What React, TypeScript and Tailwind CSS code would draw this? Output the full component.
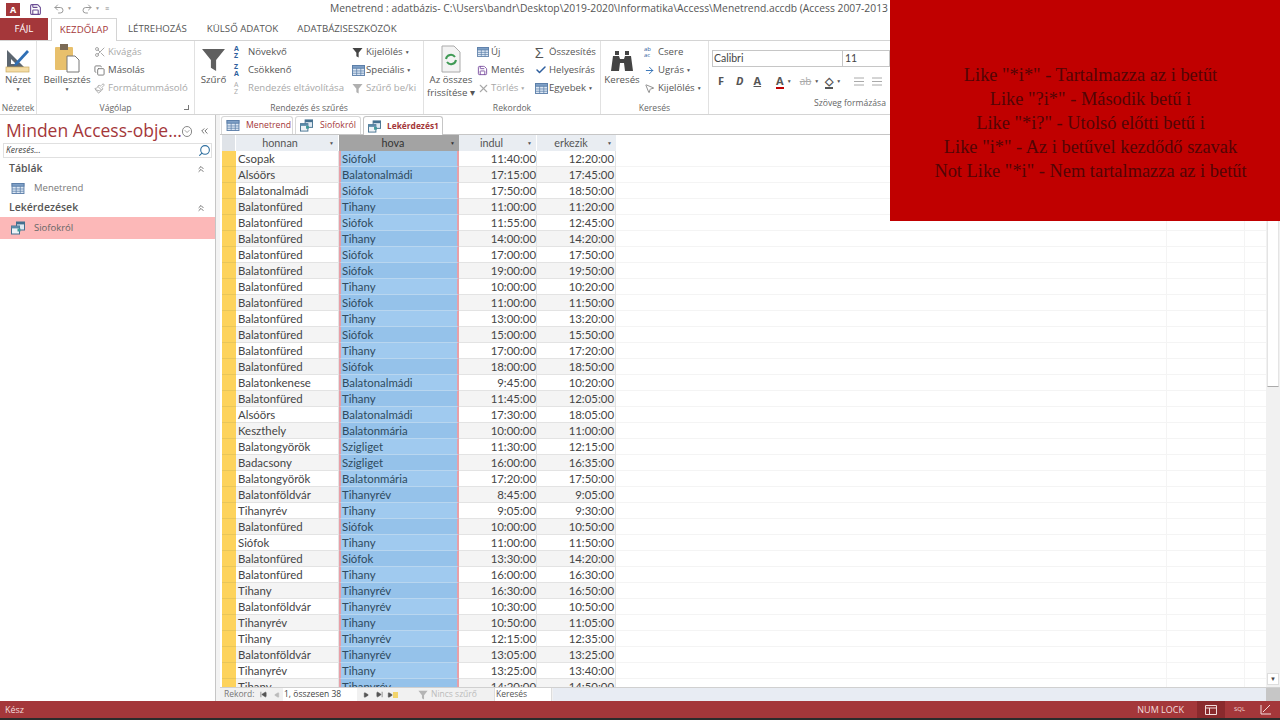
import { ChevronsUp, ChevronsLeft, Search, Scissors, Copy, Paintbrush, ChevronDown, Undo2, Redo2, Save, X, Check, ArrowRight, MousePointer2, SkipBack, SkipForward, Play } from 'lucide-react';
import type { ReactNode } from 'react';

const rows: [string, string, string, string][] = [
  ['Csopak', 'Siófok', '11:40:00', '12:20:00'],
  ['Alsóörs', 'Balatonalmádi', '17:15:00', '17:45:00'],
  ['Balatonalmádi', 'Siófok', '17:50:00', '18:50:00'],
  ['Balatonfüred', 'Tihany', '11:00:00', '11:20:00'],
  ['Balatonfüred', 'Siófok', '11:55:00', '12:45:00'],
  ['Balatonfüred', 'Tihany', '14:00:00', '14:20:00'],
  ['Balatonfüred', 'Siófok', '17:00:00', '17:50:00'],
  ['Balatonfüred', 'Siófok', '19:00:00', '19:50:00'],
  ['Balatonfüred', 'Tihany', '10:00:00', '10:20:00'],
  ['Balatonfüred', 'Siófok', '11:00:00', '11:50:00'],
  ['Balatonfüred', 'Tihany', '13:00:00', '13:20:00'],
  ['Balatonfüred', 'Siófok', '15:00:00', '15:50:00'],
  ['Balatonfüred', 'Tihany', '17:00:00', '17:20:00'],
  ['Balatonfüred', 'Siófok', '18:00:00', '18:50:00'],
  ['Balatonkenese', 'Balatonalmádi', '9:45:00', '10:20:00'],
  ['Balatonfüred', 'Tihany', '11:45:00', '12:05:00'],
  ['Alsóörs', 'Balatonalmádi', '17:30:00', '18:05:00'],
  ['Keszthely', 'Balatonmária', '10:00:00', '11:00:00'],
  ['Balatongyörök', 'Szigliget', '11:30:00', '12:15:00'],
  ['Badacsony', 'Szigliget', '16:00:00', '16:35:00'],
  ['Balatongyörök', 'Balatonmária', '17:20:00', '17:50:00'],
  ['Balatonföldvár', 'Tihanyrév', '8:45:00', '9:05:00'],
  ['Tihanyrév', 'Tihany', '9:05:00', '9:30:00'],
  ['Balatonfüred', 'Siófok', '10:00:00', '10:50:00'],
  ['Siófok', 'Tihany', '11:00:00', '11:50:00'],
  ['Balatonfüred', 'Siófok', '13:30:00', '14:20:00'],
  ['Balatonfüred', 'Tihany', '16:00:00', '16:30:00'],
  ['Tihany', 'Tihanyrév', '16:30:00', '16:50:00'],
  ['Balatonföldvár', 'Tihanyrév', '10:30:00', '10:50:00'],
  ['Tihanyrév', 'Tihany', '10:50:00', '11:05:00'],
  ['Tihany', 'Tihanyrév', '12:15:00', '12:35:00'],
  ['Balatonföldvár', 'Tihanyrév', '13:05:00', '13:25:00'],
  ['Tihanyrév', 'Tihany', '13:25:00', '13:40:00'],
  ['Tihany', 'Tihanyrév', '14:20:00', '14:50:00'],
];

const notes = [
  'Like "*i*" - Tartalmazza az i betűt',
  'Like "?i*" - Második betű i',
  'Like "*i?" - Utolsó előtti betű i',
  'Like "i*" - Az i betűvel kezdődő szavak',
  'Not Like "*i" - Nem tartalmazza az i betűt',
];

const TableIcon = ({ className = '' }: { className?: string }) => (
  <svg viewBox="0 0 14 12" className={className}>
    <rect x="0.5" y="0.5" width="13" height="11" fill="#dbe6f3" stroke="#5b7ea8" />
    <rect x="0.5" y="0.5" width="13" height="3" fill="#7fa0c6" stroke="#5b7ea8" />
    <path d="M5 3.5v8M9.5 3.5v8M0.5 6.5h13M0.5 9h13" stroke="#5b7ea8" strokeWidth="0.8" />
  </svg>
);

const QueryIcon = ({ className = '' }: { className?: string }) => (
  <svg viewBox="0 0 14 14" className={className}>
    <rect x="5.5" y="1" width="8" height="8" fill="#dfe9f2" stroke="#44708f" />
    <rect x="5.5" y="1" width="8" height="2.4" fill="#44708f" />
    <rect x="0.5" y="5" width="8" height="8" fill="#eef3f7" stroke="#44708f" />
    <rect x="0.5" y="5" width="8" height="2.4" fill="#5a8aa8" />
    <rect x="6.5" y="7.5" width="3" height="3" fill="#3f9a9a" />
  </svg>
);

const Funnel = ({ color, className = '' }: { color: string; className?: string }) => (
  <svg viewBox="0 0 24 24" className={className}>
    <path d="M1 2h22L14.5 12.5V23l-5-3v-7.5z" fill={color} />
  </svg>
);

const AlignIcon = ({ className = '' }: { className?: string }) => (
  <svg viewBox="0 0 10 9" className={`h-[9px] w-[10px] ${className}`}>
    <path d="M0 1h10M0 4.5h10M0 8h10" stroke="#aaa" />
  </svg>
);

// small ribbon row: icon + label, optional dropdown caret
function Cmd({ icon, label, off, caret, className = '' }: { icon: ReactNode; label: string; off?: boolean; caret?: boolean; className?: string }) {
  return (
    <div className={`flex h-[18px] items-center gap-[2px] whitespace-nowrap text-[9.6px] ${off ? 'text-[#a8a8a8]' : 'text-[#555]'} ${className}`}>
      <span className="-mr-[2px] flex w-[14px] shrink-0 justify-start">{icon}</span>
      <span>{label}</span>
      {caret && <span className="text-[5px] leading-none">▼</span>}
    </div>
  );
}

function Group({ label, width, launcher, children }: { label: string; width: string; launcher?: boolean; children: ReactNode }) {
  return (
    <div className={`relative flex shrink-0 flex-col border-r border-[#e1e1e1] ${width}`}>
      <div className="flex h-[61px] px-[3px] pt-[2px]">{children}</div>
      <div className="text-center text-[8.6px] leading-[12px] text-[#666]">{label}</div>
      {launcher && <span className="absolute bottom-[4px] right-[5px] h-[5px] w-[5px] border-b border-r border-[#777]" />}
    </div>
  );
}

function Big({ icon, lines, caret, className = '' }: { icon: ReactNode; lines: string[]; caret?: boolean; className?: string }) {
  return (
    <div className={`flex flex-col items-center text-[9.7px] leading-[13px] text-[#555] ${className}`}>
      <div className="flex h-[30px] items-end justify-center">{icon}</div>
      {lines.map((l) => (
        <span key={l} className="whitespace-nowrap">{l}</span>
      ))}
      {caret && <span className="mt-[1px] text-[5px] leading-none">▼</span>}
    </div>
  );
}

export default function App() {
  return (
    <div className="relative flex h-[720px] w-[1280px] flex-col overflow-hidden bg-white font-['Open_Sans',sans-serif] text-[#444]">
      {/* title bar */}
      <div className="flex h-[18px] shrink-0 items-center">
        <div className="ml-[6px] flex h-[13px] w-[14px] items-center justify-center bg-[#a4373a] text-[9px] font-bold leading-none text-white">A</div>
        <Save className="ml-[9px] h-[13px] w-[13px] text-[#6a4c93]" strokeWidth={2} />
        <Undo2 className="ml-[11px] h-[12px] w-[12px] text-[#999]" />
        <span className="ml-[2px] text-[5px] text-[#999]">▼</span>
        <Redo2 className="ml-[9px] h-[12px] w-[12px] text-[#999]" />
        <span className="ml-[2px] text-[5px] text-[#999]">▼</span>
        <span className="ml-[5px] text-[7px] text-[#888]">≡</span>
        <span className="ml-[221px] whitespace-nowrap text-[10.3px] text-[#555]">
          Menetrend : adatbázis- C:\Users\bandr\Desktop\2019-2020\Informatika\Access\Menetrend.accdb (Access 2007-2013 fájlformátum) - Access
        </span>
      </div>

      {/* ribbon tabs */}
      <div className="flex h-[22px] shrink-0 items-stretch text-[9.7px] text-[#555]">
        <div className="flex w-[48px] items-center justify-center bg-[#a4373a] text-white">FÁJL</div>
        <div className="relative z-10 -mb-px ml-[3px] flex w-[66px] items-center justify-center border border-b-0 border-[#d4d4d4] bg-white text-[#a4373a]">KEZDŐLAP</div>
        <div className="ml-[11px] flex items-center">LÉTREHOZÁS</div>
        <div className="ml-[20px] flex items-center">KÜLSŐ ADATOK</div>
        <div className="ml-[19px] flex items-center">ADATBÁZISESZKÖZÖK</div>
      </div>

      {/* ribbon */}
      <div className="flex h-[75px] shrink-0 border-y border-[#d4d4d4] bg-white">
        <Group label="Nézetek" width="w-[37px]">
          <Big
            className="w-full"
            caret
            lines={['Nézet']}
            icon={
              <svg viewBox="0 0 26 26" className="h-[26px] w-[26px]">
                <path d="M2 3v17h17z M6 12v5h5z" fill="#5c6670" fillRule="evenodd" />
                <path d="M10 16L22 3l2 2L12 18l-3 1z" fill="#2f6fb5" />
                <rect x="1" y="20" width="23" height="5" fill="#f4dca4" stroke="#c9a860" strokeWidth="0.7" />
              </svg>
            }
          />
        </Group>
        <Group label="Vágólap" width="w-[158px]" launcher>
          <Big
            className="ml-[3px] w-[48px]"
            caret
            lines={['Beillesztés']}
            icon={
              <svg viewBox="0 0 26 30" className="h-[30px] w-[26px]">
                <rect x="1" y="4" width="18" height="23" rx="1" fill="#e8c06c" />
                <rect x="6" y="1" width="8" height="6" fill="#7b6a55" />
                <path d="M13 13h8l4 4v12H13z" fill="#fff" stroke="#777" />
              </svg>
            }
          />
          <div className="ml-[3px] flex flex-col">
            <Cmd off label="Kivágás" icon={<Scissors className="h-[12px] w-[12px]" />} />
            <Cmd label="Másolás" icon={<Copy className="h-[11px] w-[11px] text-[#777]" />} />
            <Cmd off label="Formátummásoló" icon={<Paintbrush className="h-[11px] w-[11px]" />} />
          </div>
        </Group>
        <Group label="Rendezés és szűrés" width="w-[229px]">
          <Big className="ml-[1px] w-[29px]" lines={['Szűrő']} icon={<Funnel color="#5f5f5f" className="h-[27px] w-[25px]" />} />
          <div className="ml-[6px] flex w-[118px] flex-col">
            <Cmd label="Növekvő" icon={<span className="text-[7px] font-bold leading-[7px] text-[#2f5f9e]">A<br />Z</span>} />
            <Cmd label="Csökkenő" icon={<span className="text-[7px] font-bold leading-[7px] text-[#2f5f9e]">Z<br />A</span>} />
            <Cmd off label="Rendezés eltávolítása" icon={<span className="text-[7px] leading-[7px] text-[#aaa]">A<br />Z</span>} />
          </div>
          <div className="flex flex-col">
            <Cmd caret label="Kijelölés" icon={<Funnel color="#444" className="h-[11px] w-[11px]" />} />
            <Cmd caret label="Speciális" icon={<TableIcon className="h-[11px] w-[13px]" />} />
            <Cmd off label="Szűrő be/ki" icon={<Funnel color="#b0b0b0" className="h-[11px] w-[11px]" />} />
          </div>
        </Group>
        <Group label="Rekordok" width="w-[177px]">
          <Big
            className="w-[48px]"
            lines={['Az összes', 'frissítése ▾']}
            icon={
              <svg viewBox="0 0 22 28" className="h-[28px] w-[22px]">
                <path d="M2 1h12l6 6v20H2z" fill="#f3f3f3" stroke="#aaa" />
                <path d="M6 14a5 5 0 0 1 9-2M16 15a5 5 0 0 1-9 2" fill="none" stroke="#3f9a55" strokeWidth="2" />
              </svg>
            }
          />
          <div className="ml-[2px] flex w-[58px] flex-col">
            <Cmd label="Új" icon={<TableIcon className="h-[10px] w-[12px]" />} />
            <Cmd label="Mentés" icon={<Save className="h-[11px] w-[11px] text-[#7b4fa0]" />} />
            <Cmd off caret label="Törlés" icon={<X className="h-[13px] w-[13px]" />} />
          </div>
          <div className="flex flex-col">
            <Cmd label="Összesítés" icon={<span className="text-[15px] leading-none">Σ</span>} />
            <Cmd label="Helyesírás" icon={<Check className="h-[12px] w-[12px] text-[#2f5f9e]" strokeWidth={3} />} />
            <Cmd caret label="Egyebek" icon={<TableIcon className="h-[11px] w-[13px]" />} />
          </div>
        </Group>
        <Group label="Keresés" width="w-[108px]">
          <Big
            className="w-[36px]"
            lines={['Keresés']}
            icon={
              <svg viewBox="0 0 24 24" className="h-[24px] w-[24px]">
                <path d="M3 7h6l1 3h4l1-3h6l2 15h-8l-1-8h-4l-1 8H1z M5 2h4v4H5z M15 2h4v4h-4z" fill="#444" />
              </svg>
            }
          />
          <div className="ml-[4px] flex flex-col">
            <Cmd label="Csere" icon={<span className="text-[6px] leading-[6px] text-[#2f5f9e]">ab<br />ac</span>} />
            <Cmd caret label="Ugrás" icon={<ArrowRight className="h-[11px] w-[11px] text-[#2f6fb5]" />} />
            <Cmd caret label="Kijelölés" icon={<MousePointer2 className="h-[11px] w-[11px] text-[#888]" />} />
          </div>
        </Group>
        <div className="flex w-[181px] shrink-0 flex-col pl-[3px] pt-[9px]">
          <div className="flex h-[17px] w-[178px] items-center border border-[#c6c6c6] text-[10.5px]">
            <span className="w-[130px] border-r border-[#c6c6c6] pl-[1px] font-['Lato',sans-serif]">Calibri</span>
            <span className="pl-[2px] font-['Lato',sans-serif]">11</span>
          </div>
          <div className="mt-[7px] flex h-[15px] items-center pl-[6px] text-[11px] font-bold text-[#555]">
            <span>F</span>
            <span className="ml-[12px] italic">D</span>
            <span className="ml-[10px] underline">A</span>
            <span className="ml-[15px] border-b-2 border-[#c00000] leading-[12px]">A</span>
            <span className="ml-[3px] text-[5px] font-normal">▼</span>
            <span className="ml-[8px] text-[10px] font-normal text-[#aaa] line-through">ab</span>
            <span className="ml-[3px] text-[5px] font-normal">▼</span>
            <span className="ml-[6px] border-b-2 border-[#555] leading-[12px]">◇</span>
            <span className="ml-[3px] text-[5px] font-normal">▼</span>
            <AlignIcon className="ml-[13px]" />
            <AlignIcon className="ml-[8px]" />
          </div>
          <div className="mt-[8px] whitespace-nowrap pl-[102px] text-[8.6px] leading-[12px] text-[#666]">Szöveg formázása</div>
        </div>
      </div>

      {/* body */}
      <div className="flex min-h-0 flex-1">
        {/* navigation pane */}
        <div className="flex w-[216px] shrink-0 flex-col border-r border-[#c6c6c6]">
          <div className="flex h-[28px] shrink-0 items-end pb-[2px] pl-[6px] pr-[5px]">
            <span className="flex-1 whitespace-nowrap text-[17.5px] leading-[22px] text-[#a4373a]">Minden Access-obje...</span>
            <ChevronDown className="mb-[4px] h-[11px] w-[11px] rounded-full border border-[#888] text-[#777]" />
            <ChevronsLeft className="mb-[4px] ml-[7px] h-[12px] w-[12px] text-[#666]" />
          </div>
          <div className="mx-[3px] flex h-[15px] shrink-0 items-center justify-between border border-[#e0e0e0] pl-[2px] text-[8.5px] italic text-[#444]">
            Keresés...
            <Search className="h-[13px] w-[13px] -scale-x-100 text-[#2f6f9f]" />
          </div>
          <div className="mt-[1px] flex h-[20px] items-center justify-between pl-[9px] pr-[9px] text-[10.5px] font-semibold text-[#555]">
            Táblák
            <ChevronsUp className="h-[10px] w-[10px]" />
          </div>
          <div className="flex h-[19px] items-center pl-[11px] text-[9.5px] text-[#777]">
            <TableIcon className="h-[11px] w-[14px]" />
            <span className="ml-[9px]">Menetrend</span>
          </div>
          <div className="flex h-[19px] items-center justify-between pl-[9px] pr-[9px] text-[10.5px] font-semibold text-[#555]">
            Lekérdezések
            <ChevronsUp className="h-[10px] w-[10px]" />
          </div>
          <div className="flex h-[22px] items-center bg-[#fcb8b8] pl-[11px] text-[9.5px] text-[#666]">
            <QueryIcon className="h-[14px] w-[14px]" />
            <span className="ml-[9px]">Siofokról</span>
          </div>
        </div>

        {/* splitter */}
        <div className="w-[4px] shrink-0 bg-[#f3f3f3]" />

        {/* document area */}
        <div className="flex min-w-0 flex-1 flex-col">
          <div className="flex h-[20px] shrink-0 items-stretch gap-[2px] border-b border-[#c6c6c6] pl-[1px] pt-[1px] text-[8.7px] text-[#a4373a]">
            <div className="flex w-[72px] items-center gap-[6px] rounded-t-[3px] border border-b-0 border-[#d8d8d8] pl-[4px]">
              <TableIcon className="h-[11px] w-[14px]" />
              Menetrend
            </div>
            <div className="flex w-[66px] items-center gap-[7px] rounded-t-[3px] border border-b-0 border-[#d8d8d8] pl-[4px]">
              <QueryIcon className="h-[13px] w-[13px]" />
              Siofokról
            </div>
            <div className="relative z-10 -mb-px flex w-[80px] items-center gap-[6px] rounded-t-[3px] border border-b-0 border-[#c6c6c6] bg-white pl-[4px] text-[8.4px] font-bold">
              <QueryIcon className="h-[13px] w-[13px]" />
              Lekérdezés1
            </div>
          </div>

          <div className="flex min-h-0 flex-1">
            <div className="relative min-w-0 flex-1 overflow-hidden font-['Lato',sans-serif] text-[11.4px] text-[#454545]">
              {/* header row */}
              <div className="flex h-[16px] items-stretch text-[10.8px] leading-[15px] text-[#555]">
                <div className="ml-[2px] w-[14px] shrink-0 border-r border-white bg-[#dfe3e8]" />
                <div className="relative w-[103px] shrink-0 border-r border-white bg-[#e9edf2] pr-[14px] text-center">
                  honnan
                  <span className="absolute right-[4px] top-[1px] text-[5px]">▼</span>
                </div>
                <div className="relative w-[120px] shrink-0 bg-[#a3a3a3] pr-[12px] text-center text-[#333]">
                  hova
                  <span className="absolute right-[4px] top-[1px] text-[5px]">▼</span>
                </div>
                <div className="relative w-[78px] shrink-0 border-r border-white bg-[#e9edf2] pr-[12px] text-center">
                  indul
                  <span className="absolute right-[4px] top-[1px] text-[5px]">▼</span>
                </div>
                <div className="relative w-[79px] shrink-0 bg-[#e9edf2] pr-[11px] text-center">
                  erkezik
                  <span className="absolute right-[4px] top-[1px] text-[5px]">▼</span>
                </div>
              </div>
              {rows.map((r, i) => (
                <div key={i} className="flex h-[16px] items-stretch leading-[16px]">
                  <div className="ml-[2px] w-[14px] shrink-0 border-b border-[#e9c65a] bg-[#fdd35d]" />
                  <div className={`w-[103px] shrink-0 border-b border-r border-[#e3e3e3] pl-[2px] ${i % 2 ? 'bg-[#f4f4f4]' : 'bg-white'}`}>{r[0]}</div>
                  <div className={`w-[120px] shrink-0 border-x-2 border-b border-x-[#e8a0a8] border-b-[#b9d6ef] pl-[1px] text-[#2f4a5e] ${i % 2 ? 'bg-[#95c2ea]' : 'bg-[#a0caef]'}`}>{r[1]}</div>
                  <div className={`w-[78px] shrink-0 border-b border-r border-[#e3e3e3] text-right ${i % 2 ? 'bg-[#f4f4f4]' : 'bg-white'}`}>{r[2]}</div>
                  <div className={`w-[79px] shrink-0 border-b border-r border-[#e3e3e3] pr-[1px] text-right ${i % 2 ? 'bg-[#f4f4f4]' : 'bg-white'}`}>{r[3]}</div>
                  <div className="w-[551px] shrink-0 border-b border-r border-[#f4f4f4]" />
                  <div className="w-[78px] shrink-0 border-b border-r border-[#f4f4f4]" />
                  <div className="flex-1 border-b border-[#f4f4f4]" />
                </div>
              ))}
              {/* text cursor over the first cell */}
              <span className="absolute left-[153px] top-[16px] text-[11px] leading-[14px] text-[#444]">I</span>
            </div>
            {/* vertical scrollbar */}
            <div className="flex w-[14px] shrink-0 flex-col bg-[#f1f1f1] py-0 pl-[1px] pr-[1px]">
              <div className="h-[252px] border-x border-b border-x-[#e4e4e4] border-b-[#aaa] bg-white" />
              <div className="flex-1" />
              <div className="mb-[2px] flex h-[12px] items-center justify-center border border-[#ddd] bg-white text-[6px]">▼</div>
            </div>
          </div>

          {/* record navigator */}
          <div className="flex h-[14px] shrink-0 items-center border-t border-[#d0d0d0] bg-[#f1f1f1] pl-[4px] text-[8.5px] text-[#777]">
            <span className="w-[36px] shrink-0">Rekord:</span>
            <SkipBack className="h-[7px] w-[7px] shrink-0 fill-[#555] text-[#555]" />
            <Play className="ml-[7px] h-[6px] w-[6px] shrink-0 rotate-180 fill-[#bbb] text-[#bbb]" />
            <span className="ml-[3px] w-[74px] shrink-0 bg-white pl-[1px] text-[#444]">1, összesen 38</span>
            <Play className="ml-[6px] h-[6px] w-[6px] shrink-0 fill-[#555] text-[#555]" />
            <SkipForward className="ml-[7px] h-[7px] w-[7px] shrink-0 fill-[#555] text-[#555]" />
            <Play className="ml-[4px] h-[6px] w-[6px] shrink-0 fill-[#555] text-[#555]" />
            <span className="h-[6px] w-[5px] shrink-0 bg-[#f2d46b]" />
            <Funnel color="#b5b5b5" className="ml-[20px] h-[10px] w-[10px] shrink-0" />
            <span className="ml-[3px] w-[45px] shrink-0 whitespace-nowrap text-[#bbb]">Nincs szűrő</span>
            <span className="ml-[18px] flex h-full w-[58px] shrink-0 items-center border-x border-[#ddd] bg-white pl-[1px] text-[#555]">Keresés</span>
            <div className="ml-[1px] h-full flex-1 bg-[#e8ecf3]" />
            <div className="h-full w-[14px] shrink-0 bg-[#c6c6c6]" />
          </div>
        </div>
      </div>

      {/* status bar */}
      <div className="flex h-[17px] shrink-0 items-center bg-[#a4373a] pl-[5px] text-[9px] text-[#f3dcdc]">
        <span>Kész</span>
        <span className="ml-auto">NUM LOCK</span>
        <span className="ml-[13px] flex h-full w-[28px] items-center justify-center bg-[#8a2a2d]">
          <svg viewBox="0 0 12 10" className="h-[10px] w-[12px]">
            <path d="M.5.5h11v9H.5zM.5 3h11M4.5 3v6.5" fill="none" stroke="#f3dcdc" />
          </svg>
        </span>
        <span className="ml-[9px] w-[12px] text-[6px]">SQL</span>
        <span className="ml-[14px] mr-[8px] flex w-[12px]">
          <svg viewBox="0 0 12 11" className="h-[11px] w-[12px]">
            <path d="M1 1v9h10M3 8l7-7" fill="none" stroke="#f3dcdc" />
          </svg>
        </span>
      </div>
      <div className="h-[2px] shrink-0 bg-[#2b2b2b]" />

      {/* red note pasted over the window */}
      <div className="absolute right-0 top-0 flex h-[221px] w-[390px] flex-col items-center bg-[#c00000] pl-[11px] pt-[63px] font-['Liberation_Serif',serif] text-[18.4px] leading-[24px] text-[#520505]">
        {notes.map((n) => (
          <div key={n} className="whitespace-nowrap">{n}</div>
        ))}
      </div>
    </div>
  );
}
